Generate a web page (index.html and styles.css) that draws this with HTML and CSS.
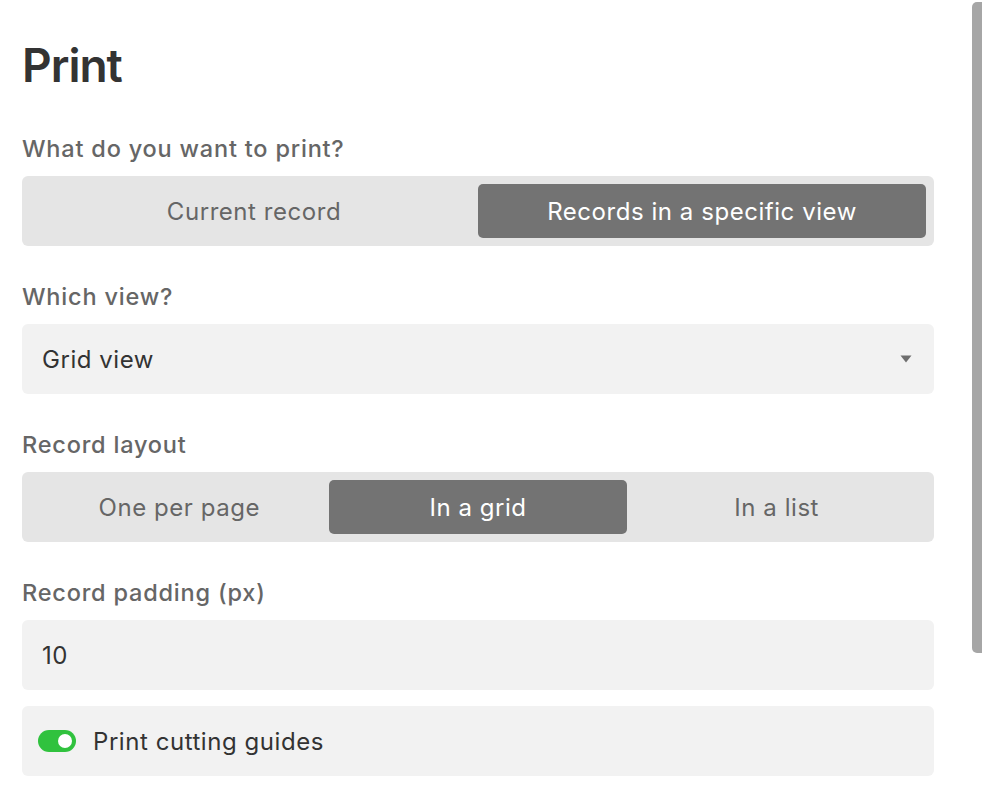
FILE: index.html
```html
<!DOCTYPE html>
<html>
<head>
	<meta http-equiv="Content-Type" content="text/html;charset=utf-8"/>
	<title>Print</title>
	<link rel="stylesheet" href="styles.css">
</head>
<body>
	<div class="panel">
		<h1 class="title">Print</h1>

		<div class="field">
			<div class="label">What do you want to print?</div>
			<div class="segmented two">
				<span class="seg">Current record</span>
				<span class="seg on">Records in a specific view</span>
			</div>
		</div>

		<div class="field">
			<div class="label">Which view?</div>
			<div class="select">
				<span>Grid view</span>
				<svg class="caret" width="12" height="8" viewBox="0 0 12 8"><path d="M0.5 0.5 L11.5 0.5 L6 7.5 Z" fill="#6e6e6e"/></svg>
			</div>
		</div>

		<div class="field">
			<div class="label">Record layout</div>
			<div class="segmented three">
				<span class="seg">One per page</span>
				<span class="seg on">In a grid</span>
				<span class="seg">In a list</span>
			</div>
		</div>

		<div class="field">
			<div class="label">Record padding (px)</div>
			<div class="input">10</div>
			<div class="switch-row">
				<span class="switch"><span class="knob"></span></span>
				<span>Print cutting guides</span>
			</div>
		</div>
	</div>
	<div class="scrollbar"></div>
</body>
</html>
```

FILE: styles.css
```css
*{
	margin: 0;
	padding: 0;
	box-sizing: border-box;
}
body{
	background: #fff;
	font-family: Inter, "Noto Sans", sans-serif;
	color: #333;
	width: 982px;
	height: 804px;
	overflow: hidden;
	position: relative;
}
.panel{
	width: 912px;
	margin-left: 22px;
	padding-top: 35px;
}
.title{
	font-size: 46px;
	font-weight: 600;
	line-height: 60px;
	color: #333;
	letter-spacing: -1px;
	margin-bottom: 38px;
}
.field{
	margin-bottom: 35px;
}
.label{
	font-size: 23.5px;
	font-weight: 500;
	line-height: 32px;
	color: #666;
	letter-spacing: 0.8px;
	margin-bottom: 11px;
}
.segmented{
	display: flex;
	height: 70px;
	padding: 8px;
	background: #e5e5e5;
	border-radius: 6px;
}
.seg{
	flex: 1;
	display: flex;
	align-items: center;
	justify-content: center;
	font-size: 24px;
	letter-spacing: 0.55px;
	color: #666;
	border-radius: 5px;
}
.seg.on{
	background: #737373;
	color: #fff;
}
.select, .input, .switch-row{
	height: 70px;
	background: #f2f2f2;
	border-radius: 6px;
	display: flex;
	align-items: center;
	padding: 0 20px;
	font-size: 24px;
	letter-spacing: 0.55px;
	color: #333;
}
.select{
	justify-content: space-between;
}
.caret{
	margin-right: 2px;
}
.switch-row{
	margin-top: 16px;
	padding-left: 16px;
	gap: 17px;
}
.switch{
	width: 38px;
	height: 22px;
	border-radius: 11px;
	background: #30c23e;
	position: relative;
}
.knob{
	position: absolute;
	right: 4px;
	top: 4px;
	width: 14px;
	height: 14px;
	border-radius: 50%;
	background: #fff;
}
.scrollbar{
	position: absolute;
	left: 972px;
	top: 2px;
	width: 10px;
	height: 651px;
	background: #a6a6a6;
	border-radius: 5px 0 0 5px;
}
```
